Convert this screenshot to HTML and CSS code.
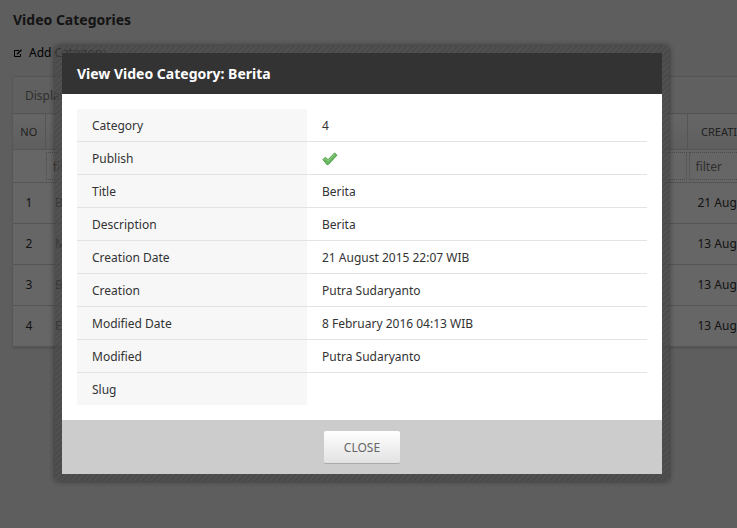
FILE: index.html
```html
<!DOCTYPE html>
<html lang="en">
<head>
<meta charset="utf-8">
<title>Video Categories</title>
<link rel="stylesheet" href="styles.css">
</head>
<body>
<main class="page">
  <h1 class="page-title">Video Categories</h1>
  <a class="add-link" href="#add">
    <svg class="add-icon" viewBox="0 0 10 10" aria-hidden="true"><path d="M6 2.5H1.5v6h6V6" fill="none" stroke="currentColor"/><path d="M4 6.2 8.5 1.8" fill="none" stroke="currentColor" stroke-width="1.3"/></svg>
    Add Category
  </a>
  <section class="panel">
    <div class="panel-bar">Displaying 1-4 of 4 results.</div>
    <table class="grid">
      <colgroup><col class="col-no"><col><col class="col-date"></colgroup>
      <thead>
        <tr class="grid-head"><th>NO</th><th class="centered">CATEGORY</th><th>CREATION DATE</th></tr>
        <tr class="grid-filter">
          <td></td>
          <td><input type="text" placeholder="filter" aria-label="Filter category"></td>
          <td><input type="text" placeholder="filter" aria-label="Filter creation date"></td>
        </tr>
      </thead>
      <tbody>
        <tr><td>1</td><td>Berita</td><td>21 August 2015</td></tr>
        <tr><td>2</td><td>Music</td><td>13 August 2015</td></tr>
        <tr><td>3</td><td>Budaya</td><td>13 August 2015</td></tr>
        <tr><td>4</td><td>Event</td><td>13 August 2015</td></tr>
      </tbody>
    </table>
  </section>
</main>

<div class="overlay">
  <div class="frame">
    <div class="dialog" role="dialog" aria-modal="true" aria-labelledby="dialog-title">
      <h2 class="dialog-title" id="dialog-title">View Video Category: Berita</h2>
      <div class="dialog-body">
        <table class="detail">
          <tr><th scope="row">Category</th><td>4</td></tr>
          <tr><th scope="row">Publish</th><td><svg class="check" viewBox="0 0 16 14" role="img" aria-label="Published"><path d="M1 7.5 3.3 5.2 6 7.7 12.6 1 15 3.2 6.3 12.5 4.8 12.5Z" fill="#68b85e" stroke="#4f9e4a"/><path d="M2.2 7.3 3.4 6.2 6 8.8 12.7 2.2" fill="none" stroke="#95cf8c"/></svg></td></tr>
          <tr><th scope="row">Title</th><td>Berita</td></tr>
          <tr><th scope="row">Description</th><td>Berita</td></tr>
          <tr><th scope="row">Creation Date</th><td>21 August 2015 22:07 WIB</td></tr>
          <tr><th scope="row">Creation</th><td>Putra Sudaryanto</td></tr>
          <tr><th scope="row">Modified Date</th><td>8 February 2016 04:13 WIB</td></tr>
          <tr><th scope="row">Modified</th><td>Putra Sudaryanto</td></tr>
          <tr><th scope="row">Slug</th><td></td></tr>
        </table>
      </div>
      <div class="dialog-footer"><button class="close" type="button">CLOSE</button></div>
    </div>
  </div>
</div>
</body>
</html>
```
FILE: styles.css
```css
* { box-sizing: border-box; }

body {
  margin: 0;
  min-height: 100vh;
  overflow: hidden;
  background: #ebebeb;
  color: #333;
  font: 12px/16px "Noto Sans", Tahoma, sans-serif;
}

.page { padding: 12px 13px 0; }

.page-title {
  margin: 0 0 17px;
  font-size: 14px;
  line-height: 16px;
}

.add-link {
  display: flex;
  align-items: center;
  gap: 6px;
  color: #000;
  text-decoration: none;
}

.add-icon { width: 10px; height: 10px; }

.panel {
  margin: 16px -84px 0 0;
  background: #fff;
  border: 1px solid #d5d5d5;
  border-width: 0 0 1px;
  box-shadow: 0 0 2px #aaa;
}

.panel-bar {
  height: 36px;
  padding: 11px 12px;
  background: #f0f0f0;
  color: #777;
}

.grid {
  width: 100%;
  border-collapse: collapse;
  table-layout: fixed;
}

.col-no { width: 32px; }
.col-date { width: 120px; }

.grid th {
  height: 36px;
  padding: 0 13px;
  border: 1px solid #d5d5d5;
  border-left: 0;
  background: linear-gradient(#fff, #ececec);
  color: #555;
  font-size: 11px;
  font-weight: normal;
  text-align: left;
  white-space: nowrap;
}

.grid th.centered { text-align: center; }

.grid td {
  height: 41px;
  padding: 0 10px;
  border-bottom: 1px solid #d5d5d5;
}

.grid th:first-child,
.grid td:first-child { padding: 0; text-align: center; }

.grid .grid-filter td { height: 32px; padding: 2px 1px; }

.grid-filter input {
  display: block;
  width: 100%;
  height: 28px;
  padding: 0 6px;
  border: 1px dotted #bbb;
  background: transparent;
  font: inherit;
}

.grid-filter input::placeholder { color: #777; }

.overlay {
  position: fixed;
  inset: 0;
  display: flex;
  align-items: center;
  justify-content: center;
  padding: 0 13px 2px 0;
  background: rgba(0, 0, 0, .6);
}

.frame {
  width: 100%;
  max-width: 614px;
  padding: 7px;
  border-radius: 3px;
  background: repeating-linear-gradient(135deg, rgba(67, 67, 67, .75) 0 2px, rgba(75, 75, 75, .75) 2px 4px);
  box-shadow: 0 0 6px rgba(0, 0, 0, .5);
}

.dialog { background: #fff; }

.dialog-title {
  margin: 0;
  padding: 13px 15px 12px;
  background: #333;
  color: #fff;
  font-size: 14px;
  line-height: 16px;
}

.dialog-body { padding: 15px; }

.detail {
  width: 100%;
  border-collapse: collapse;
  table-layout: fixed;
}

.detail th,
.detail td {
  height: 33px;
  padding: 2px 15px 0;
  border-bottom: 1px solid #e3e3e3;
  font-weight: normal;
  text-align: left;
}

.detail th { width: 230px; background: #f7f7f7; }

.detail tr:last-child th,
.detail tr:last-child td { height: 32px; border-bottom: 0; }

.check { display: block; width: 16px; height: 14px; }

.dialog-footer {
  display: flex;
  justify-content: center;
  padding: 11px 15px 10px;
  background: #ccc;
}

.close {
  height: 33px;
  padding: 2px 20px 0;
  border: 0;
  border-bottom: 1px solid #aaa;
  border-radius: 2px;
  background: linear-gradient(#fff, #e2e2e2);
  color: #666;
  font: inherit;
}
```
